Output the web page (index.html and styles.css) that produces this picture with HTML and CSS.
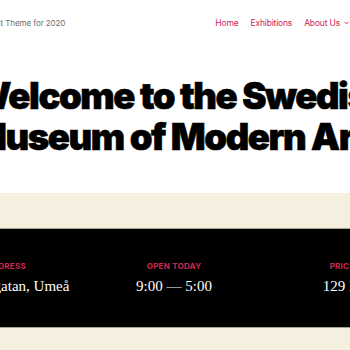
FILE: index.html
```html
<!DOCTYPE html>
<html lang="en">
<head>
    <meta charset="UTF-8">
    <meta name="viewport" content="width=device-width, initial-scale=1.0">
    <title>The Swedish Museum of Modern Art</title>
    <link rel="stylesheet" href="styles.css">
</head>
<body>
    <header class="site-header">
        <div class="site-branding">
            <p class="site-description">The Default Theme for 2020</p>
        </div>
        <nav class="primary-menu">
            <a href="#">Home</a>
            <a href="#">Exhibitions</a>
            <a href="#" class="has-sub">About Us
                <svg class="chevron" width="5" height="4" viewBox="0 0 10 7"><path d="M1 1.2l4 4 4-4" fill="none" stroke="#cd2653" stroke-width="1.8"/></svg>
            </a>
        </nav>
    </header>

    <!-- Hero title -->
    <div class="entry-header">
        <h1 class="entry-title">Welcome to the Swedish Museum of Modern Art</h1>
    </div>

    <!-- Visitor info -->
    <div class="entry-content">
        <div class="info-box">
            <div class="columns">
                <div class="column">
                    <h3 class="label">Address</h3>
                    <p class="value">123 Storgatan, Umeå</p>
                </div>
                <div class="column">
                    <h3 class="label">Open Today</h3>
                    <p class="value">9:00 — 5:00</p>
                </div>
                <div class="column">
                    <h3 class="label">Price</h3>
                    <p class="value">129 kr</p>
                </div>
            </div>
        </div>
    </div>
</body>
</html>
```

FILE: styles.css
```css
body {
    margin: 0;
    padding: 0;
    background-color: #fff;
    font-family: Inter, "Noto Sans", sans-serif;
    overflow: hidden;
    width: 350px;
    height: 350px;
}
.site-header {
    display: flex;
    justify-content: space-between;
    align-items: center;
    height: 45px;
}
.site-branding {
    margin-left: -40px;
}
.site-description {
    margin: 0;
    font-size: 8px;
    color: #6d6d6d;
    letter-spacing: -0.01em;
}
.primary-menu {
    display: flex;
    align-items: center;
    gap: 12px;
    padding-right: 1px;
}
.primary-menu a {
    color: #cd2653;
    text-decoration: none;
    font-size: 8.5px;
    letter-spacing: -0.02em;
}
.has-sub {
    display: flex;
    align-items: center;
    gap: 4px;
}
.entry-header {
    height: 148px;
    overflow: hidden;
}
.entry-title {
    margin: 31px 0 0 -28px;
    width: 440px;
    font-size: 36.5px;
    font-weight: 900;
    line-height: 1.12;
    letter-spacing: -0.039em;
    color: #000;
    -webkit-text-stroke: 0.6px #000;
}
.entry-content {
    background-color: #f5efe0;
    padding: 35px 0 22px;
}
.info-box {
    background-color: #000;
    border-top: 1px solid #a9a394;
    border-bottom: 1px solid #a9a394;
    height: 98px;
    overflow: hidden;
}
.columns {
    display: grid;
    grid-template-columns: repeat(3, 168px);
    margin-left: -78px;
    width: 504px;
    padding-top: 33px;
    text-align: center;
}
.label {
    margin: 0;
    font-size: 8px;
    font-weight: 700;
    letter-spacing: 0.03em;
    text-transform: uppercase;
    color: #cd2653;
    line-height: 1;
}
.value {
    margin: 8px 0 0;
    font-family: "Liberation Serif", serif;
    font-size: 15px;
    color: #fff;
}
```
